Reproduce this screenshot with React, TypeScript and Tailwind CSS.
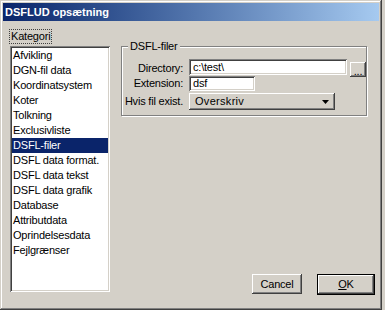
import React from "react"

const categories = [
  "Afvikling",
  "DGN-fil data",
  "Koordinatsystem",
  "Koter",
  "Tolkning",
  "Exclusivliste",
  "DSFL-filer",
  "DSFL data format.",
  "DSFL data tekst",
  "DSFL data grafik",
  "Database",
  "Attributdata",
  "Oprindelsesdata",
  "Fejlgrænser",
]

const sunken =
  "bg-white shadow-[inset_1px_1px_0_#808080,inset_-1px_-1px_0_#ffffff,inset_2px_2px_0_#404040,inset_-2px_-2px_0_#d4d0c8]"
const raised =
  "bg-[#d4d0c8] shadow-[inset_-1px_-1px_0_#404040,inset_1px_1px_0_#ffffff,inset_-2px_-2px_0_#808080]"

export default function App() {
  const selected = "DSFL-filer"

  return (
    <div className="w-[385px] h-[310px] bg-[#d4d0c8] font-['Liberation_Sans',Arial,sans-serif] text-[11px] text-black tracking-[-0.2px]">
      <div className="w-[382px] h-[310px] p-[3px] flex flex-col shadow-[inset_-1px_-1px_0_#404040,inset_1px_1px_0_#d4d0c8,inset_-2px_-2px_0_#808080,inset_2px_2px_0_#ffffff]">
        {/* title bar */}
        <div className="h-[18px] flex items-center pl-[2px] bg-gradient-to-r from-[#0a246a] to-[#a6caf0] text-white font-bold tracking-normal">
          DSFLUD opsætning
        </div>

        <div className="flex pt-[8px] pl-[6px]">
          {/* left: category list */}
          <div className="w-[101px] flex flex-col items-start">
            <div className="h-[15px] px-[1px] border border-dotted border-[#404040] leading-[13px]">Kategori</div>
            <div className={`ml-[1px] mt-[2px] w-[100px] h-[246px] p-[2px] ${sunken}`}>
              {categories.map((c) => (
                <div
                  key={c}
                  className={`h-[15px] leading-[15px] pl-[1px] whitespace-nowrap ${
                    c === selected ? "bg-[#0a246a] text-white" : ""
                  }`}
                >
                  {c}
                </div>
              ))}
            </div>
          </div>

          {/* right: settings */}
          <div className="ml-[11px] w-[254px] h-[266px] flex flex-col pt-[17px]">
            <div className="relative w-[246px] h-[70px] border border-[#808080] shadow-[1px_1px_0_#ffffff,inset_1px_1px_0_#ffffff] pt-[12px]">
              <div className="absolute top-[-8px] left-[6px] px-[2px] bg-[#d4d0c8] leading-[14px]">DSFL-filer</div>

              <div className="flex h-[16px]">
                <div className="w-[61px] text-right leading-[18px]">Directory:</div>
                <div className={`ml-[6px] w-[158px] h-[16px] pl-[4px] leading-[16px] ${sunken}`}>c:\test\</div>
                <div className={`ml-[3px] mt-[3px] w-[16px] h-[15px] flex items-end justify-center pb-[2px] leading-[8px] ${raised}`}>
                  ...
                </div>
              </div>

              <div className="flex h-[15px] mt-[1px]">
                <div className="w-[61px] text-right leading-[15px]">Extension:</div>
                <div className={`ml-[6px] w-[66px] h-[15px] pl-[4px] leading-[15px] ${sunken}`}>dsf</div>
              </div>

              <div className="flex h-[16px] mt-[2px]">
                <div className="w-[61px] text-right leading-[16px] whitespace-nowrap">Hvis fil exist.</div>
                <div className={`ml-[6px] w-[146px] h-[17px] flex items-center justify-between pl-[6px] pr-[6px] tracking-[0.3px] ${raised}`}>
                  <span>Overskriv</span>
                  <svg width="7" height="4" viewBox="0 0 7 4">
                    <polygon points="0,0 7,0 3.5,4" fill="#000" />
                  </svg>
                </div>
              </div>
            </div>

            {/* buttons */}
            <div className="mt-auto flex justify-end items-start gap-[15px]">
              <div className={`w-[50px] h-[20px] flex items-center justify-center ${raised}`}>Cancel</div>
              <div className="w-[58px] h-[21px] border border-black">
                <div className={`w-full h-full flex items-center justify-center ${raised}`}>
                  <span>
                    <span className="underline">O</span>K
                  </span>
                </div>
              </div>
            </div>
          </div>
        </div>
      </div>
    </div>
  )
}
